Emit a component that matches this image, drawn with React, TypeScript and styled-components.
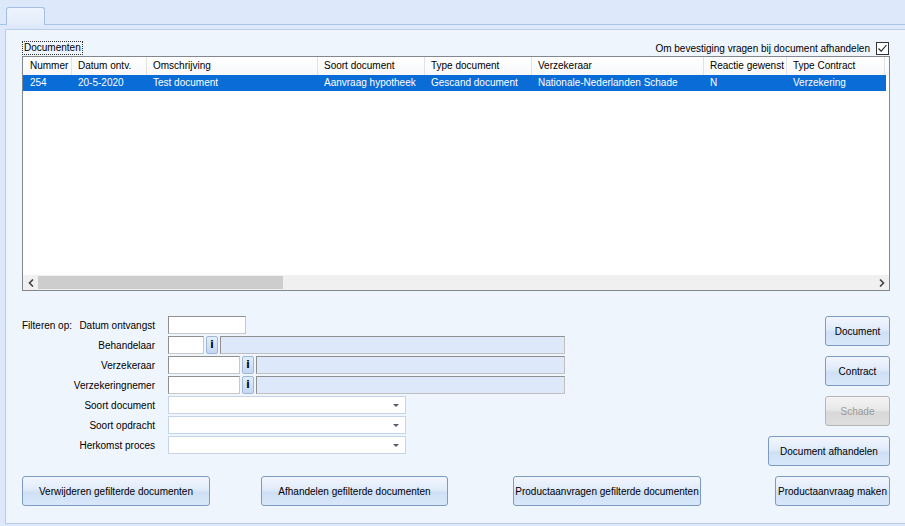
import React from "react";
import styled, { createGlobalStyle } from "styled-components";

const GlobalStyle = createGlobalStyle`
  html, body {
    margin: 0;
    padding: 0;
    background: #dde9fb;
    font-family: "Liberation Sans", Arial, sans-serif;
    font-size: 10px;
    color: #000;
  }
`;

const columns = [
  { title: "Nummer", width: 48 },
  { title: "Datum ontv.", width: 75 },
  { title: "Omschrijving", width: 171 },
  { title: "Soort document", width: 107 },
  { title: "Type document", width: 107 },
  { title: "Verzekeraar", width: 172 },
  { title: "Reactie gewenst", width: 83 },
  { title: "Type Contract", width: 98 },
];

const rows = [
  ["254", "20-5-2020", "Test document", "Aanvraag hypotheek", "Gescand document", "Nationale-Nederlanden Schade", "N", "Verzekering"],
];

const App = () => {
  return (
    <>
      <GlobalStyle />
      <Window>
        <TabStrip>
          <Tab />
        </TabStrip>
        <Panel>
          <TopRow>
            <GroupLabel>Documenten</GroupLabel>
            <CheckRow>
              Om bevestiging vragen bij document afhandelen
              <CheckBox>
                <svg width="11" height="11" viewBox="0 0 11 11">
                  <path d="M1.5 5.5 L4.2 8.2 L9.5 2" fill="none" stroke="#222" strokeWidth="1.1" />
                </svg>
              </CheckBox>
            </CheckRow>
          </TopRow>

          <ListView>
            <HeaderRow>
              {columns.map((c) => (
                <HeaderCell key={c.title} style={{ width: c.width }}>{c.title}</HeaderCell>
              ))}
            </HeaderRow>
            {rows.map((r, i) => (
              <DataRow key={i} $selected>
                {r.map((v, j) => (
                  <DataCell key={j} style={{ width: columns[j].width }}>{v}</DataCell>
                ))}
              </DataRow>
            ))}
            <ListBody />
            <HScroll>
              <ScrollArrow>
                <svg width="6" height="8" viewBox="0 0 6 8"><path d="M5 0.5 L1.5 4 L5 7.5" fill="none" stroke="#444" strokeWidth="1.6" /></svg>
              </ScrollArrow>
              <ScrollTrack>
                <ScrollThumb />
              </ScrollTrack>
              <ScrollArrow>
                <svg width="6" height="8" viewBox="0 0 6 8"><path d="M1 0.5 L4.5 4 L1 7.5" fill="none" stroke="#444" strokeWidth="1.6" /></svg>
              </ScrollArrow>
            </HScroll>
          </ListView>

          <LowerArea>
            <LeftColumn>
              <FilterGrid>
                <FilterTitle>Filteren op:</FilterTitle>
                <FieldLabel>Datum ontvangst</FieldLabel>
                <FieldLine>
                  <TextInput $width={78} />
                </FieldLine>

                <span />
                <FieldLabel>Behandelaar</FieldLabel>
                <FieldLine $wide>
                  <TextInput $width={36} />
                  <InfoButton>i</InfoButton>
                  <ReadOnlyField />
                </FieldLine>

                <span />
                <FieldLabel>Verzekeraar</FieldLabel>
                <FieldLine $wide>
                  <TextInput $width={72} />
                  <InfoButton>i</InfoButton>
                  <ReadOnlyField />
                </FieldLine>

                <span />
                <FieldLabel>Verzekeringnemer</FieldLabel>
                <FieldLine $wide>
                  <TextInput $width={72} />
                  <InfoButton>i</InfoButton>
                  <ReadOnlyField />
                </FieldLine>

                <span />
                <FieldLabel>Soort document</FieldLabel>
                <FieldLine>
                  <Combo><ComboArrow /></Combo>
                </FieldLine>

                <span />
                <FieldLabel>Soort opdracht</FieldLabel>
                <FieldLine>
                  <Combo><ComboArrow /></Combo>
                </FieldLine>

                <span />
                <FieldLabel>Herkomst proces</FieldLabel>
                <FieldLine>
                  <Combo><ComboArrow /></Combo>
                </FieldLine>
              </FilterGrid>

              <BottomRow>
                <ActionButton $width={188}>Verwijderen gefilterde documenten</ActionButton>
                <ActionButton $width={187} $offset={51}>Afhandelen gefilterde documenten</ActionButton>
                <ActionButton $width={188} $offset={65}>Productaanvragen gefilterde documenten</ActionButton>
              </BottomRow>
            </LeftColumn>

            <RightColumn>
              <ActionButton $width={65}>Document</ActionButton>
              <ActionButton $width={65}>Contract</ActionButton>
              <ActionButton $width={65} disabled>Schade</ActionButton>
              <ActionButton $width={122}>Document afhandelen</ActionButton>
              <ActionButton $width={115}>Productaanvraag maken</ActionButton>
            </RightColumn>
          </LowerArea>
        </Panel>
      </Window>
    </>
  );
};

export default App;

const Window = styled.div`
  width: 905px;
  height: 526px;
  overflow: hidden;
  background: #dde9fb;
`;

const TabStrip = styled.div`
  height: 24px;
  border-bottom: 1px solid #a9c3e6;
  display: flex;
  align-items: flex-end;
  padding-left: 6px;
`;

const Tab = styled.div`
  width: 37px;
  height: 17px;
  background: linear-gradient(#eef4fd, #e3ecfa);
  border: 1px solid #a6bedf;
  border-bottom: none;
  border-radius: 3px 3px 0 0;
  margin-bottom: -1px;
`;

const Panel = styled.div`
  margin: 4px 0 0 5px;
  background: #eef5fd;
  border: 1px solid #b9cde9;
  border-right: none;
  padding: 10px 15px 0 16px;
  box-sizing: border-box;
  height: 495px;
`;

const TopRow = styled.div`
  display: flex;
  justify-content: space-between;
  align-items: center;
  height: 16px;
`;

const GroupLabel = styled.span`
  border: 1px dotted #333;
  padding: 0 1px;
  line-height: 12px;
`;

const CheckRow = styled.label`
  display: flex;
  align-items: center;
  gap: 6px;
  margin-right: 1px;
`;

const CheckBox = styled.span`
  width: 11px;
  height: 11px;
  border: 1px solid #333;
  background: #fff;
  display: inline-flex;
  align-items: center;
  justify-content: center;
`;

const ListView = styled.div`
  height: 235px;
  border: 1px solid #828790;
  background: #fff;
  display: flex;
  flex-direction: column;
  box-sizing: border-box;
  overflow: hidden;
`;

const HeaderRow = styled.div`
  display: flex;
  height: 18px;
  flex-shrink: 0;
  padding-left: 1px;
  background: linear-gradient(#ffffff, #f7f8fa);
`;

const HeaderCell = styled.div`
  box-sizing: border-box;
  flex-shrink: 0;
  padding-left: 6px;
  line-height: 18px;
  border-right: 1px solid #dfe3e8;
  white-space: nowrap;
  overflow: hidden;
`;

const DataRow = styled.div<{ $selected?: boolean }>`
  display: flex;
  height: 16px;
  flex-shrink: 0;
  padding-left: 1px;
  background: ${(p) => (p.$selected ? "#0a6cd7" : "transparent")};
  color: ${(p) => (p.$selected ? "#fff" : "#000")};
  margin-right: 3px;
`;

const DataCell = styled.div`
  box-sizing: border-box;
  flex-shrink: 0;
  padding-left: 6px;
  line-height: 16px;
  white-space: nowrap;
  overflow: hidden;
`;

const ListBody = styled.div`
  flex: 1;
`;

const HScroll = styled.div`
  display: flex;
  height: 15px;
  background: #f0f0f0;
  flex-shrink: 0;
`;

const ScrollArrow = styled.div`
  width: 15px;
  display: flex;
  align-items: center;
  justify-content: center;
`;

const ScrollTrack = styled.div`
  flex: 1;
  display: flex;
  align-items: stretch;
  padding: 1px 0;
`;

const ScrollThumb = styled.div`
  width: 245px;
  background: #cdcdcd;
`;

const LowerArea = styled.div`
  display: flex;
  justify-content: space-between;
  margin-top: 25px;
`;

const LeftColumn = styled.div`
  display: flex;
  flex-direction: column;
`;

const FilterGrid = styled.div`
  display: grid;
  grid-template-columns: 60px 60px auto;
  column-gap: 13px;
  row-gap: 2px;
  align-items: center;
`;

const FilterTitle = styled.span`
  white-space: nowrap;
`;

const FieldLabel = styled.span`
  justify-self: end;
  text-align: right;
  white-space: nowrap;
`;

const FieldLine = styled.div<{ $wide?: boolean }>`
  display: flex;
  gap: 2px;
  height: 18px;
  width: ${(p) => (p.$wide ? "397px" : "auto")};
`;

const TextInput = styled.div<{ $width: number }>`
  width: ${(p) => p.$width}px;
  flex-shrink: 0;
  box-sizing: border-box;
  background: #fff;
  border: 1px solid #8f8f8f;
  border-right-color: #c8c8c8;
  border-bottom-color: #c8c8c8;
`;

const InfoButton = styled.div`
  width: 12px;
  flex-shrink: 0;
  box-sizing: border-box;
  border: 1px solid #9fb6d6;
  border-radius: 2px;
  background: linear-gradient(#e3eefc, #c4d8f3);
  font-weight: bold;
  font-family: "DejaVu Sans", sans-serif;
  font-size: 10px;
  line-height: 16px;
  text-align: center;
`;

const ReadOnlyField = styled.div`
  flex: 1;
  box-sizing: border-box;
  background: #dde9fa;
  border: 1px solid #8f8f8f;
  border-right-color: #c0c0c0;
  border-bottom-color: #c0c0c0;
`;

const Combo = styled.div`
  width: 238px;
  box-sizing: border-box;
  background: #fff;
  border: 1px solid #c5d4e8;
  position: relative;
`;

const ComboArrow = styled.span`
  position: absolute;
  right: 6px;
  top: 7px;
  width: 0;
  height: 0;
  border-left: 3px solid transparent;
  border-right: 3px solid transparent;
  border-top: 3px solid #555a66;
`;

const BottomRow = styled.div`
  display: flex;
  margin-top: 22px;
`;

const ActionButton = styled.button<{ $width: number; $offset?: number }>`
  width: ${(p) => p.$width}px;
  height: 30px;
  margin-left: ${(p) => p.$offset ?? 0}px;
  padding: 0;
  box-sizing: border-box;
  font-family: "Liberation Sans", Arial, sans-serif;
  font-size: 10px;
  color: #000;
  border: 1px solid #7d9bc0;
  border-radius: 3px;
  background: linear-gradient(#f1f6fd 0%, #e0ebfa 45%, #cfe0f6 55%, #d9e7f9 100%);
  white-space: nowrap;

  &:disabled {
    color: #9a9a9a;
    border-color: #b5b5b5;
    background: linear-gradient(#f4f4f4 0%, #e8e8e8 45%, #d8d8d8 55%, #dedede 100%);
  }
`;

const RightColumn = styled.div`
  display: flex;
  flex-direction: column;
  align-items: flex-end;
  gap: 10px;
`;
